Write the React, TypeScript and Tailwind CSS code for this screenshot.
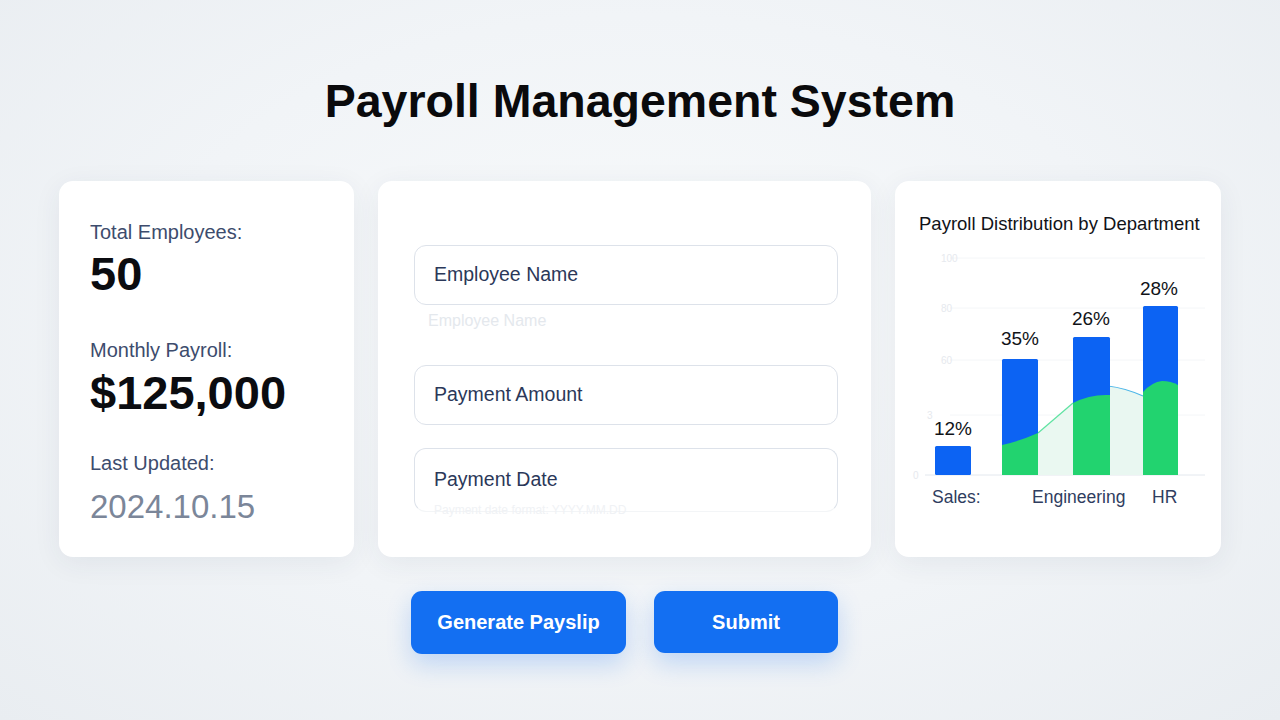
const cardShadow = "shadow-[0_6px_28px_rgba(40,60,90,0.07)]";

function SummaryCard() {
  return (
    <div className={`rounded-[14px] bg-white pl-[31px] pt-[37px] ${cardShadow}`}>
      <div className="text-[20px] leading-[28px] text-[#3d4c6d]">Total Employees:</div>
      <div className="mt-[4px] text-[47px] font-bold leading-none text-[#0b0c10]">50</div>
      <div className="mt-[39px] text-[20px] leading-[28px] text-[#3d4c6d]">Monthly Payroll:</div>
      <div className="mt-[5px] text-[47px] font-bold leading-none text-[#0b0c10]">$125,000</div>
      <div className="mt-[33px] text-[20px] leading-[28px] text-[#3d4c6d]">Last Updated:</div>
      <div className="mt-[13px] text-[33px] leading-none text-[#7b8699]">2024.10.15</div>
    </div>
  );
}

function Field({ label, className = "" }: { label: string; className?: string }) {
  return (
    <div
      className={`flex h-[60px] items-center rounded-[12px] border border-[#dde2ea] bg-white pl-[19px] text-[19.5px] text-[#2b3859] ${className}`}
    >
      {label}
    </div>
  );
}

function FormCard() {
  return (
    <div className={`rounded-[14px] bg-white pl-[36px] pr-[33px] pt-[64px] ${cardShadow}`}>
      <Field label="Employee Name" />
      <div className="mt-[6px] pl-[14px] text-[16px] leading-[20px] text-[#e4e8ed]">Employee Name</div>
      <Field label="Payment Amount" className="mt-[34px]" />
      <Field label="Payment Date" className="mt-[23px] h-[64px] border-b-[#f3f5f7]" />
      <div className="-mt-[10px] pl-[20px] text-[12px] leading-[16px] text-[#f0f2f5]">
        Payment date format: YYYY.MM.DD
      </div>
    </div>
  );
}

function Chart() {
  const blue = "#0c63f3";
  const green = "#22d36f";
  return (
    <svg width="305" height="268" viewBox="0 0 305 268" className="block">
      {[13, 63, 115, 170].map((y) => (
        <line key={y} x1="45" x2="300" y1={y} y2={y} stroke="#f4f6f8" strokeWidth="1" />
      ))}
      <g fill="#e6e9ee" fontSize="10">
        <text x="36" y="17">100</text>
        <text x="36" y="67">80</text>
        <text x="36" y="119">60</text>
        <text x="22" y="174">3</text>
        <text x="8" y="234">0</text>
      </g>
      <line x1="20" x2="300" y1="230" y2="230" stroke="#e3e8ee" strokeWidth="1" />

      {/* soft area between bars */}
      <path d="M133 188 L168 158 L168 230 L133 230 Z" fill="#eaf8f1" />
      <path d="M133 188 L168 158" stroke="#5fe3a2" strokeWidth="1.2" fill="none" />
      <path d="M203 141 Q220 143 238 151 L238 230 L203 230 Z" fill="#e9f7f1" />
      <path d="M203 141 Q220 143 238 151" stroke="#4cb6e8" strokeWidth="1.2" fill="none" />

      <rect x="30" y="201" width="36" height="29" rx="1.5" fill={blue} />
      <rect x="97" y="114" width="36" height="116" rx="1.5" fill={blue} />
      <rect x="168" y="92" width="37" height="138" rx="1.5" fill={blue} />
      <rect x="238" y="61" width="35" height="169" rx="1.5" fill={blue} />

      <path d="M97 200 Q115 196 133 188 L133 230 L97 230 Z" fill={green} />
      <path d="M168 158 Q185 149 205 150 L205 230 L168 230 Z" fill={green} />
      <path d="M238 147 Q247 137 257 136 Q266 136 273 140 L273 230 L238 230 Z" fill={green} />

      <g fill="#111318" fontSize="19" textAnchor="middle">
        <text x="48" y="190">12%</text>
        <text x="115" y="100">35%</text>
        <text x="186" y="80">26%</text>
        <text x="254" y="50">28%</text>
      </g>
      <g fill="#2f3d60" fontSize="17.5">
        <text x="27" y="258">Sales:</text>
        <text x="127" y="258">Engineering</text>
        <text x="247" y="258">HR</text>
      </g>
    </svg>
  );
}

function ChartCard() {
  return (
    <div className={`rounded-[14px] bg-white pl-[10px] pt-[31px] ${cardShadow}`}>
      <div className="ml-[14px] whitespace-nowrap text-[18.5px] leading-[24px] text-[#111318]">
        Payroll Distribution by Department
      </div>
      <div className="mt-[9px]">
        <Chart />
      </div>
    </div>
  );
}

export default function App() {
  return (
    <div className="min-h-[720px] w-full bg-[radial-gradient(ellipse_at_50%_45%,#f8fafb_0%,#f1f4f7_55%,#e9edf1_100%)] pt-[78px] font-['Liberation_Sans',Arial,sans-serif]">
      <h1 className="text-center text-[46.5px] font-bold leading-none text-[#0a0a0c]">
        Payroll Management System
      </h1>

      <div className="mx-auto mt-[56px] w-[1162px]">
        <div className="grid h-[376px] grid-cols-[295px_493px_326px] gap-[24px]">
          <SummaryCard />
          <FormCard />
          <ChartCard />
        </div>

        <div className="mt-[34px] grid grid-cols-[295px_493px_326px] gap-[24px]">
          <div />
          <div className="flex justify-center gap-[28px]">
            <button className="h-[63px] w-[215px] rounded-[11px] bg-[#136ff2] text-[20px] font-bold text-white shadow-[0_10px_24px_rgba(19,111,242,0.22)]">
              Generate Payslip
            </button>
            <button className="h-[62px] w-[184px] rounded-[11px] bg-[#136ff2] text-[20px] font-bold text-white shadow-[0_10px_24px_rgba(19,111,242,0.22)]">
              Submit
            </button>
          </div>
          <div />
        </div>
      </div>
    </div>
  );
}
